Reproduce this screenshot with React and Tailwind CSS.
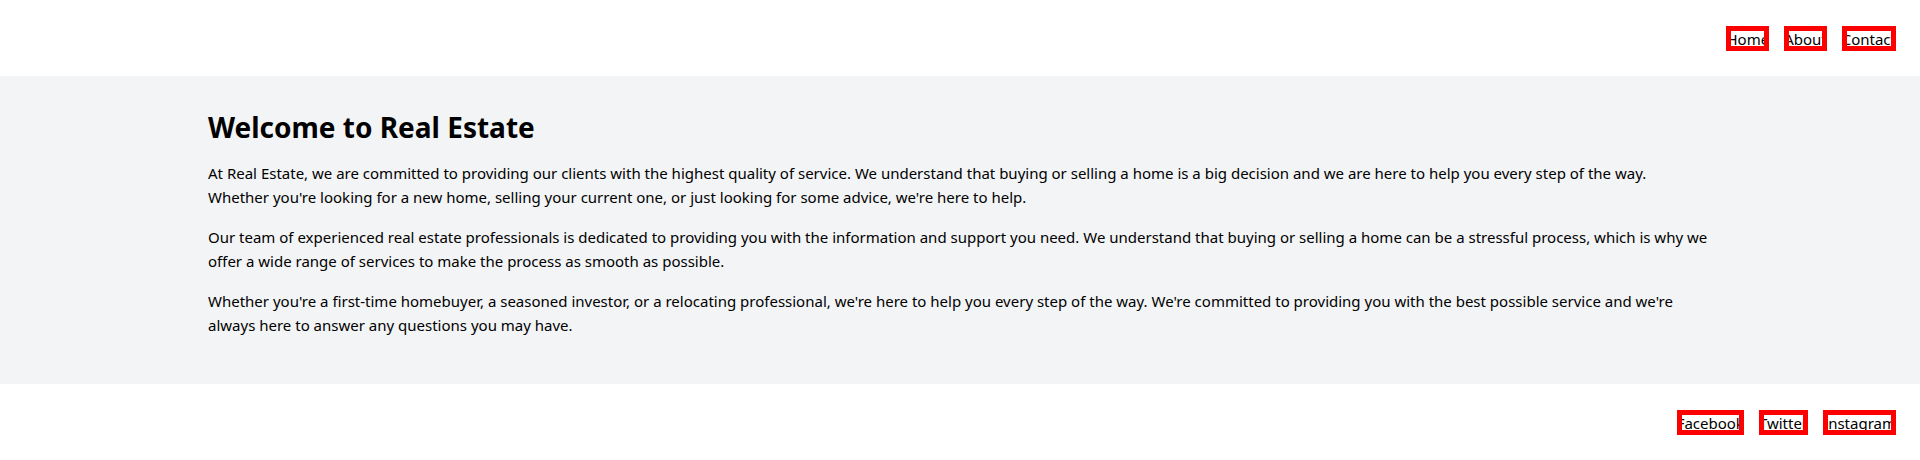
const pages = ['Home', 'About', 'Contact'];
const socials = ['Facebook', 'Twitter', 'Instagram'];

const paragraphs = [
  "At Real Estate, we are committed to providing our clients with the highest quality of service. We understand that buying or selling a home is a big decision and we are here to help you every step of the way. Whether you're looking for a new home, selling your current one, or just looking for some advice, we're here to help.",
  'Our team of experienced real estate professionals is dedicated to providing you with the information and support you need. We understand that buying or selling a home can be a stressful process, which is why we offer a wide range of services to make the process as smooth as possible.',
  "Whether you're a first-time homebuyer, a seasoned investor, or a relocating professional, we're here to help you every step of the way. We're committed to providing you with the best possible service and we're always here to answer any questions you may have.",
];

function LinkRow({ label, items }) {
  return (
    <nav aria-label={label} className="flex justify-end gap-[15px] px-6 pt-[26px] pb-[25px]">
      {items.map((item) => (
        <a
          key={item}
          href={'#' + item.toLowerCase()}
          className="block pt-px leading-6 outline-[5px] -outline-offset-[5px] outline-[#ff0000] outline-solid"
        >
          {item}
        </a>
      ))}
    </nav>
  );
}

export default function App() {
  return (
    <div className="bg-white font-['Segoe_UI','Noto_Sans',sans-serif] text-[15px] leading-6 text-black">
      <header>
        <LinkRow label="Main" items={pages} />
      </header>
      <main className="bg-[#f3f4f6] pt-[33px] pb-[47px]">
        <div className="mx-auto max-w-[1536px] pr-[18px] pl-4">
          <h1 className="mb-4 text-[28px] leading-9 font-bold">Welcome to Real Estate</h1>
          <div className="space-y-4">
            {paragraphs.map((text) => (
              <p key={text}>{text}</p>
            ))}
          </div>
        </div>
      </main>
      <footer>
        <LinkRow label="Social" items={socials} />
      </footer>
    </div>
  );
}
